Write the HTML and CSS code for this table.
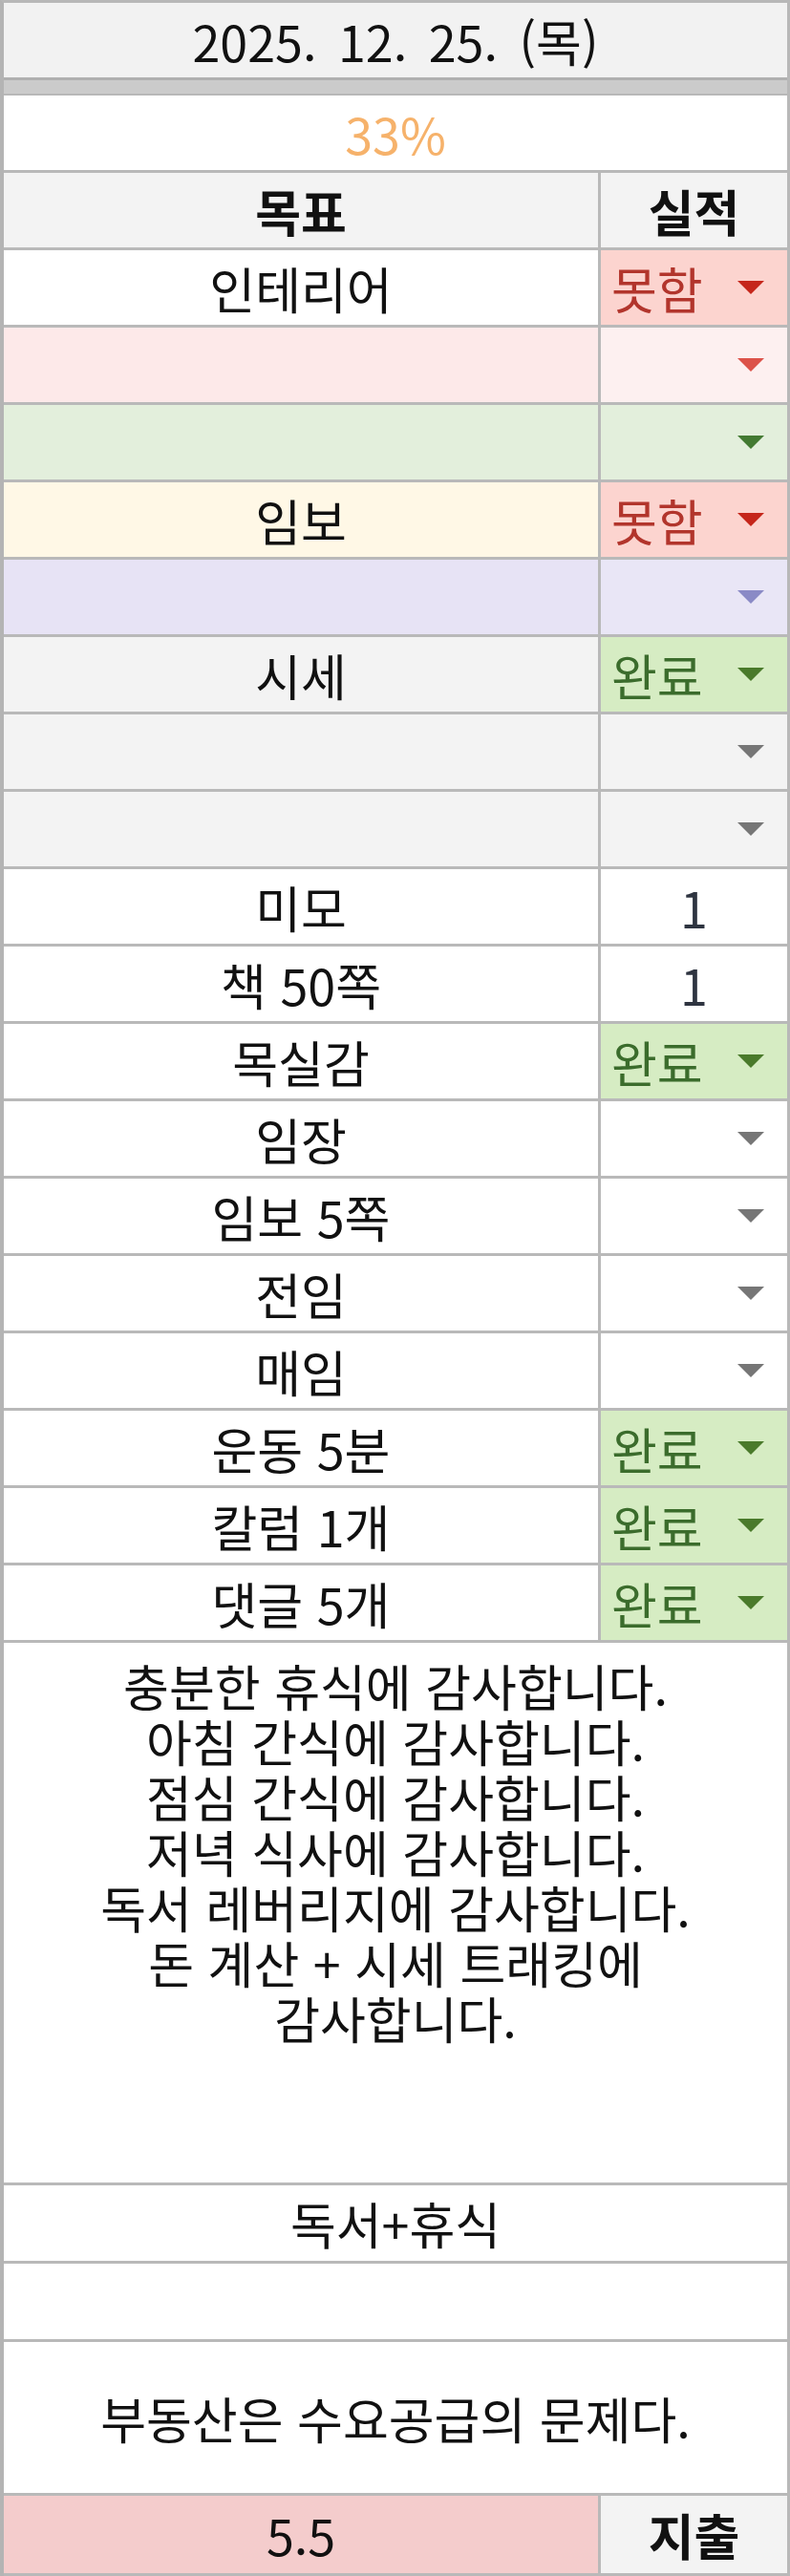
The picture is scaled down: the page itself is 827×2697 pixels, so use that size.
FILE: index.html
```html
<!DOCTYPE html>
<html lang="ko">
<head>
<meta charset="utf-8">
<title>2025. 12. 25.</title>
<link rel="stylesheet" href="styles.css">
</head>
<body>
<div class="sheet">
  <div class="date-row">2025. 12. 25. (목)</div>
  <div class="band"></div>
  <div class="pct-row">33%</div>

  <div class="row head">
    <div class="goal">목표</div>
    <div class="res res-center">실적</div>
  </div>

  <div class="row">
    <div class="goal">인테리어</div>
    <div class="res chip-red"><span class="chip-text">못함</span><svg class="arrow" viewBox="0 0 28 14"><polygon points="0,0 28,0 14,14"/></svg></div>
  </div>
  <div class="row bg-pink">
    <div class="goal"></div>
    <div class="res res-pink arrow-pink"><svg class="arrow" viewBox="0 0 28 14"><polygon points="0,0 28,0 14,14"/></svg></div>
  </div>
  <div class="row bg-green">
    <div class="goal"></div>
    <div class="res arrow-green"><svg class="arrow" viewBox="0 0 28 14"><polygon points="0,0 28,0 14,14"/></svg></div>
  </div>
  <div class="row bg-yellow">
    <div class="goal">임보</div>
    <div class="res chip-red"><span class="chip-text">못함</span><svg class="arrow" viewBox="0 0 28 14"><polygon points="0,0 28,0 14,14"/></svg></div>
  </div>
  <div class="row bg-purple">
    <div class="goal"></div>
    <div class="res res-purple arrow-purple"><svg class="arrow" viewBox="0 0 28 14"><polygon points="0,0 28,0 14,14"/></svg></div>
  </div>
  <div class="row bg-grey">
    <div class="goal">시세</div>
    <div class="res chip-green"><span class="chip-text">완료</span><svg class="arrow" viewBox="0 0 28 14"><polygon points="0,0 28,0 14,14"/></svg></div>
  </div>
  <div class="row bg-grey">
    <div class="goal"></div>
    <div class="res arrow-grey"><svg class="arrow" viewBox="0 0 28 14"><polygon points="0,0 28,0 14,14"/></svg></div>
  </div>
  <div class="row bg-grey">
    <div class="goal"></div>
    <div class="res arrow-grey"><svg class="arrow" viewBox="0 0 28 14"><polygon points="0,0 28,0 14,14"/></svg></div>
  </div>
  <div class="row">
    <div class="goal">미모</div>
    <div class="res res-center num">1</div>
  </div>
  <div class="row">
    <div class="goal">책 50쪽</div>
    <div class="res res-center num">1</div>
  </div>
  <div class="row">
    <div class="goal">목실감</div>
    <div class="res chip-green"><span class="chip-text">완료</span><svg class="arrow" viewBox="0 0 28 14"><polygon points="0,0 28,0 14,14"/></svg></div>
  </div>
  <div class="row">
    <div class="goal">임장</div>
    <div class="res arrow-grey"><svg class="arrow" viewBox="0 0 28 14"><polygon points="0,0 28,0 14,14"/></svg></div>
  </div>
  <div class="row">
    <div class="goal">임보 5쪽</div>
    <div class="res arrow-grey"><svg class="arrow" viewBox="0 0 28 14"><polygon points="0,0 28,0 14,14"/></svg></div>
  </div>
  <div class="row">
    <div class="goal">전임</div>
    <div class="res arrow-grey"><svg class="arrow" viewBox="0 0 28 14"><polygon points="0,0 28,0 14,14"/></svg></div>
  </div>
  <div class="row">
    <div class="goal">매임</div>
    <div class="res arrow-grey"><svg class="arrow" viewBox="0 0 28 14"><polygon points="0,0 28,0 14,14"/></svg></div>
  </div>
  <div class="row">
    <div class="goal">운동 5분</div>
    <div class="res chip-green"><span class="chip-text">완료</span><svg class="arrow" viewBox="0 0 28 14"><polygon points="0,0 28,0 14,14"/></svg></div>
  </div>
  <div class="row">
    <div class="goal">칼럼 1개</div>
    <div class="res chip-green"><span class="chip-text">완료</span><svg class="arrow" viewBox="0 0 28 14"><polygon points="0,0 28,0 14,14"/></svg></div>
  </div>
  <div class="row">
    <div class="goal">댓글 5개</div>
    <div class="res chip-green"><span class="chip-text">완료</span><svg class="arrow" viewBox="0 0 28 14"><polygon points="0,0 28,0 14,14"/></svg></div>
  </div>

  <div class="thanks">
    <div class="thanks-text">
      충분한 휴식에 감사합니다.<br>
      아침 간식에 감사합니다.<br>
      점심 간식에 감사합니다.<br>
      저녁 식사에 감사합니다.<br>
      독서 레버리지에 감사합니다.<br>
      돈 계산 + 시세 트래킹에<br>
      감사합니다.
    </div>
  </div>
  <div class="full-row">독서+휴식</div>
  <div class="full-row"></div>
  <div class="note">부동산은 수요공급의 문제다.</div>
  <div class="row last">
    <div class="goal total">5.5</div>
    <div class="res res-center strong">지출</div>
  </div>
</div>
</body>
</html>
```

FILE: styles.css
```css
html, body {
  margin: 0;
  padding: 0;
  background: #ffffff;
}

.sheet {
  width: 827px;
  box-sizing: border-box;
  border-top: 3px solid #b8b8b8;
  border-left: 4px solid #b4b4b4;
  border-right: 3px solid #b8b8b8;
  font-family: "Noto Sans CJK KR", "Noto Sans", sans-serif;
  font-size: 52px;
  color: #111111;
}

.date-row {
  height: 78px;
  background: #f2f2f2;
  border-bottom: 3px solid #b0b0b0;
  display: flex;
  align-items: center;
  justify-content: center;
  word-spacing: 8px;
}

.band {
  height: 14px;
  background: #cbcbcb;
  border-bottom: 2px solid #b8b8b8;
}

.pct-row {
  height: 78px;
  border-bottom: 3px solid #b8b8b8;
  display: flex;
  align-items: center;
  justify-content: center;
  color: #f6b26b;
  background: #ffffff;
}

.row {
  display: flex;
  height: 81px;
  box-sizing: border-box;
  border-bottom: 3px solid #b9b9b9;
  background: #ffffff;
}

.row.last {
  height: 84px;
}

.goal {
  width: 622px;
  flex: none;
  display: flex;
  align-items: center;
  justify-content: center;
}

.res {
  flex: 1;
  border-left: 3px solid #b9b9b9;
  display: flex;
  align-items: center;
  padding: 0 24px 0 11px;
}

.res-center {
  justify-content: center;
  padding: 0;
}

.num {
  color: #2e3440;
}

.head {
  background: #f3f3f3;
  font-weight: 700;
}

.strong {
  font-weight: 700;
  background: #f3f3f3;
}

.arrow {
  width: 28px;
  height: 14px;
  margin-left: auto;
  display: block;
  fill: #767676;
}

.chip-text {
  display: block;
}

.chip-red {
  background: #fcd4cf;
  color: #b2352c;
}
.chip-red .arrow { fill: #c5261b; }

.chip-green {
  background: #d6ecc3;
  color: #3b6c2c;
}
.chip-green .arrow { fill: #4a7a2b; }

.bg-pink { background: #fde9e9; }
.res-pink { background: #fdf0f0; }
.arrow-pink .arrow { fill: #dc5249; }

.bg-green { background: #e3efdc; }
.arrow-green .arrow { fill: #437a32; }

.bg-yellow { background: #fff8e6; }

.bg-purple { background: #e7e3f5; }
.res-purple { background: #e9e6f6; }
.arrow-purple .arrow { fill: #8a8ac6; }

.bg-grey { background: #f3f3f3; }
.arrow-grey .arrow { fill: #767676; }

.thanks {
  box-sizing: content-box;
  height: 437px;
  padding-bottom: 128px;
  border-bottom: 3px solid #b9b9b9;
  display: flex;
  align-items: center;
  justify-content: center;
}

.thanks-text {
  text-align: center;
  line-height: 58px;
}

.full-row {
  height: 79px;
  border-bottom: 3px solid #b9b9b9;
  display: flex;
  align-items: center;
  justify-content: center;
}

.note {
  height: 158px;
  border-bottom: 3px solid #b9b9b9;
  display: flex;
  align-items: center;
  justify-content: center;
}

.total {
  background: #f4cccc;
}
```
